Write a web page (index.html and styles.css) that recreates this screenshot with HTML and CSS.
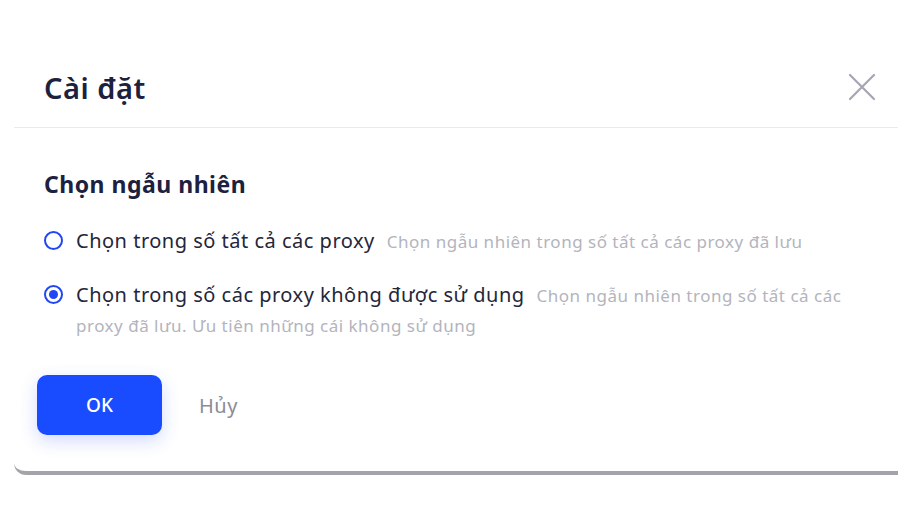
FILE: index.html
```html
<!DOCTYPE html>
<html lang="vi">
<head>
<meta charset="utf-8">
<link rel="stylesheet" href="styles.css">
</head>
<body>
<div class="modal">
  <div class="modal-header">
    <h1 class="modal-title">Cài đặt</h1>
    <button class="close-btn" aria-label="Đóng">
      <svg width="28" height="28" viewBox="0 0 28 28"><path d="M2 2 L26 26 M26 2 L2 26" stroke="#a4a6b2" stroke-width="2.2" stroke-linecap="round" fill="none"/></svg>
    </button>
  </div>
  <div class="modal-body">
    <h2 class="section-title">Chọn ngẫu nhiên</h2>
    <label class="option">
      <span class="radio"></span>
      <span class="option-text"><span class="label">Chọn trong số tất cả các proxy</span><span class="desc">Chọn ngẫu nhiên trong số tất cả các proxy đã lưu</span></span>
    </label>
    <label class="option">
      <span class="radio checked"></span>
      <span class="option-text"><span class="label">Chọn trong số các proxy không được sử dụng</span><span class="desc">Chọn ngẫu nhiên trong số tất cả các proxy đã lưu. Ưu tiên những cái không sử dụng</span></span>
    </label>
  </div>
  <div class="modal-footer">
    <button class="btn-ok">OK</button>
    <button class="btn-cancel">Hủy</button>
  </div>
</div>
</body>
</html>
```
FILE: styles.css
```css
* { box-sizing: border-box; }
html, body { margin: 0; padding: 0; background: #fff; }
body { font-family: "Noto Sans", "Open Sans", sans-serif; }

.modal {
  margin-left: 14px;
  width: 884px;
  height: 475px;
  background: #fff;
  border-bottom: 4px solid #a3a3aa;
  border-bottom-left-radius: 12px;
  display: flex;
  flex-direction: column;
}

.modal-header {
  height: 128px;
  padding: 48px 22px 0 30px;
  display: flex;
  align-items: center;
  justify-content: space-between;
  border-bottom: 1px solid #e9e9ee;
}
.modal-title {
  margin: 0;
  font-size: 29px;
  letter-spacing: 0.5px;
  font-weight: 600;
  color: #1d2140;
  line-height: 40px;
}
.close-btn {
  border: 0;
  background: none;
  padding: 0;
  width: 28px;
  height: 28px;
  display: flex;
  cursor: pointer;
  margin-top: -1px;
}

.modal-body {
  padding: 40px 40px 0 30px;
}
.section-title {
  margin: 0 0 26px;
  font-size: 23px;
  letter-spacing: 0.5px;
  font-weight: 700;
  color: #1d2140;
  line-height: 32px;
}
.option {
  display: flex;
  align-items: flex-start;
  gap: 13px;
  margin-bottom: 23px;
  line-height: 29px;
}
.option:last-child { margin-bottom: 34px; }
.radio {
  flex: none;
  width: 19px;
  height: 19px;
  border: 2.5px solid #2146f5;
  border-radius: 50%;
  margin: 5px 0 0 0;
  display: flex;
  align-items: center;
  justify-content: center;
}
.radio.checked::after {
  content: "";
  width: 9px;
  height: 9px;
  border-radius: 50%;
  background: #2146f5;
}
.option-text { flex: 1; }
.label {
  font-size: 20px;
  letter-spacing: 0.5px;
  color: #24263a;
  margin-right: 12px;
}
.desc {
  font-size: 17px;
  letter-spacing: 0.5px;
  color: #b3b4bd;
}

.modal-footer {
  padding: 0 0 0 23px;
  display: flex;
  align-items: center;
  gap: 37px;
}
.btn-ok {
  width: 125px;
  height: 60px;
  border: 0;
  border-radius: 10px;
  background: #1a4cff;
  color: #fff;
  font-family: inherit;
  font-size: 19px;
  font-weight: 500;
  box-shadow: 0 6px 18px rgba(40, 70, 240, 0.2);
}
.btn-cancel {
  border: 0;
  background: none;
  padding: 0;
  font-family: inherit;
  font-size: 20px;
  letter-spacing: 0.5px;
  color: #8b8c96;
}
```
